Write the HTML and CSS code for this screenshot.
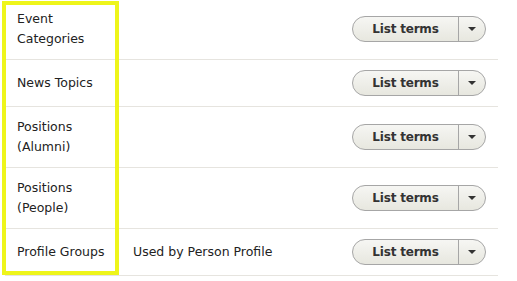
FILE: index.html
```html
<!DOCTYPE html>
<html>
<head>
<meta charset="utf-8">
<link rel="stylesheet" href="styles.css">
</head>
<body>
<div class="page">
  <table class="vocab">
    <tbody>
      <tr>
        <td class="name">Event Categories</td>
        <td class="desc"></td>
        <td class="ops">
          <div class="dropbutton"><span class="main">List terms</span><span class="toggle"><span class="arrow"></span></span></div>
        </td>
      </tr>
      <tr>
        <td class="name">News Topics</td>
        <td class="desc"></td>
        <td class="ops">
          <div class="dropbutton"><span class="main">List terms</span><span class="toggle"><span class="arrow"></span></span></div>
        </td>
      </tr>
      <tr>
        <td class="name">Positions (Alumni)</td>
        <td class="desc"></td>
        <td class="ops">
          <div class="dropbutton"><span class="main">List terms</span><span class="toggle"><span class="arrow"></span></span></div>
        </td>
      </tr>
      <tr>
        <td class="name">Positions (People)</td>
        <td class="desc"></td>
        <td class="ops">
          <div class="dropbutton"><span class="main">List terms</span><span class="toggle"><span class="arrow"></span></span></div>
        </td>
      </tr>
      <tr>
        <td class="name">Profile Groups</td>
        <td class="desc">Used by Person Profile</td>
        <td class="ops">
          <div class="dropbutton"><span class="main">List terms</span><span class="toggle"><span class="arrow"></span></span></div>
        </td>
      </tr>
    </tbody>
  </table>
  <div class="highlight"></div>
</div>
</body>
</html>
```

FILE: styles.css
```css
html, body {
  margin: 0;
  padding: 0;
  background: #ffffff;
}

.page {
  position: relative;
  width: 517px;
  height: 281px;
  overflow: hidden;
  font-family: "DejaVu Sans", Verdana, sans-serif;
  font-size: 12.5px;
  color: #222222;
}

.vocab {
  border-collapse: collapse;
  margin: -1px 0 0 5px;
  width: 493px;
}

.vocab td {
  padding: 10px 12px;
  line-height: 20px;
  border-bottom: 1px solid #e6e4df;
  vertical-align: middle;
}

.vocab .name {
  width: 92px;
}

.vocab .desc {
  width: 195px;
}

.vocab .ops {
  width: 134px;
}

.dropbutton {
  display: flex;
  height: 26px;
  width: 134px;
  box-sizing: border-box;
  border: 1px solid #a6a6a6;
  border-radius: 20px;
  background: linear-gradient(to bottom, #f6f6f3, #e7e7df);
  overflow: hidden;
}

.dropbutton .main {
  flex: 1;
  display: flex;
  align-items: center;
  justify-content: center;
  font-weight: bold;
  font-size: 12px;
  letter-spacing: -0.2px;
  color: #333333;
  border-right: 1px solid #a6a6a6;
}

.dropbutton .toggle {
  width: 26px;
  display: flex;
  align-items: center;
  justify-content: center;
}

.arrow {
  width: 0;
  height: 0;
  border-left: 4px solid transparent;
  border-right: 4px solid transparent;
  border-top: 4px solid #333333;
  margin-right: 1px;
}

.highlight {
  position: absolute;
  left: 2px;
  top: 1px;
  width: 117px;
  height: 274px;
  box-sizing: border-box;
  border: 4px solid #eef51a;
  pointer-events: none;
}
```
